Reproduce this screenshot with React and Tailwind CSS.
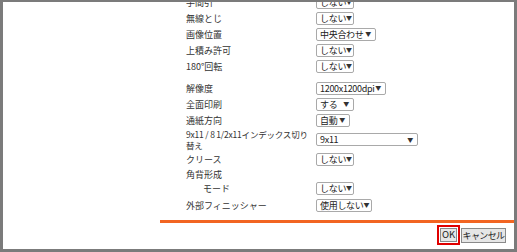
import React from "react";

const font = { fontFamily: '"Noto Sans CJK JP", "Liberation Sans", sans-serif' };

const Select = ({ value, width }) => (
  <div
    className={`flex h-[13px] shrink-0 items-center justify-between whitespace-nowrap rounded-[2px] border border-[#a9a9a9] bg-white pl-[3px] pr-[4px] text-[9px] leading-none tracking-[-0.3px] text-[#222] ${width}`}
  >
    <span>{value}</span>
    <span className="text-[6px] text-[#333]">▼</span>
  </div>
);

const Row = ({ label, select, height = "h-[16px]", indent = false }) => (
  <div className={`flex shrink-0 items-center ${height}`}>
    <div
      className={`w-[130px] shrink-0 whitespace-nowrap text-[9px] leading-none text-[#333] ${
        indent ? "pl-[17px]" : ""
      }`}
    >
      {label}
    </div>
    {select}
  </div>
);

const App = () => {
  return (
    <div
      className="h-[252px] w-[517px] overflow-hidden border-t-[2px] border-r-[3px] border-b-[3px] border-l-[3px] border-[#7b7b7b] bg-white"
      style={font}
    >
      <div className="flex h-full flex-col">
        {/* settings list */}
        <div className="-mt-[8px] flex shrink-0 flex-col pl-[183px]">
          <Row label="手間引" select={<Select value="しない" width="w-[38px]" />} />
          <Row label="無線とじ" select={<Select value="しない" width="w-[38px]" />} />
          <Row label="画像位置" select={<Select value="中央合わせ" width="w-[60px]" />} />
          <Row label="上積み許可" select={<Select value="しない" width="w-[38px]" />} />
          <Row label="180°回転" select={<Select value="しない" width="w-[38px]" />} />

          <div className="h-[6px] shrink-0" />

          <Row label="解像度" select={<Select value="1200x1200dpi" width="w-[70px]" />} />
          <Row label="全面印刷" select={<Select value="する" width="w-[38px]" />} />
          <Row label="通紙方向" select={<Select value="自動" width="w-[34px]" />} />
          <div className="flex h-[23px] shrink-0 items-center">
            <div className="w-[130px] shrink-0 whitespace-nowrap text-[8.5px] leading-[11px] tracking-[-0.2px] text-[#333]">
              9x11 / 8 1/2x11インデックス切り
              <br />
              替え
            </div>
            <Select value="9x11" width="w-[102px]" />
          </div>
          <Row label="クリース" select={<Select value="しない" width="w-[38px]" />} />
          <Row label="角背形成" height="h-[14px]" />
          <Row
            label="モード"
            indent
            height="h-[14px]"
            select={<Select value="しない" width="w-[38px]" />}
          />
          <div className="h-[2px] shrink-0" />
          <Row
            label="外部フィニッシャー"
            select={<Select value="使用しない" width="w-[56px]" />}
          />
        </div>

        {/* footer */}
        <div className="mt-[7px] ml-[157px] h-[3px] shrink-0 bg-[#f26522]" />
        <div className="flex shrink-0 justify-end gap-[1px] pt-[2px] pr-[8px]">
          <div className="flex h-[20px] w-[23px] items-center justify-center border-2 border-[#e00000]">
            <button className="h-[14px] border border-[#8a8a8a] bg-[#e6e6e6] px-[1px] text-[9.5px] leading-none text-[#222]">
              OK
            </button>
          </div>
          <div className="flex h-[20px] items-center">
            <button className="h-[15px] w-[45px] whitespace-nowrap border border-[#8a8a8a] bg-[#e6e6e6] px-0 text-[9px] leading-none tracking-[-0.6px] text-[#222]">
              キャンセル
            </button>
          </div>
        </div>
      </div>
    </div>
  );
};

export default App;
